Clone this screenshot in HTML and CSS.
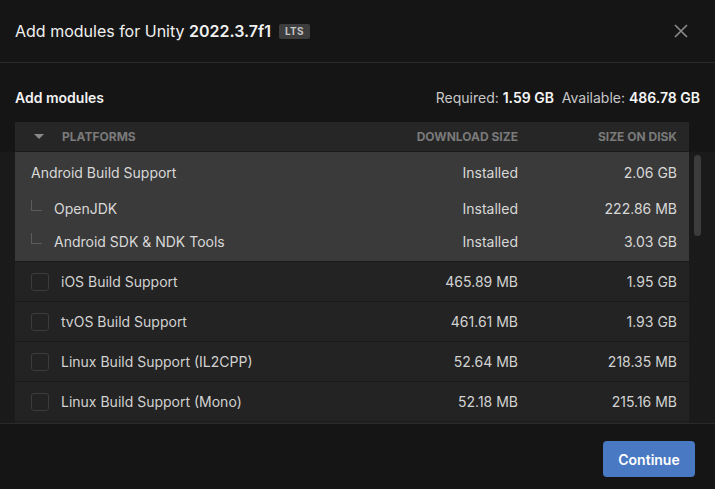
FILE: index.html
```html
<!DOCTYPE html>
<html>
<head>
<meta charset="utf-8">
<link rel="stylesheet" href="styles.css">
</head>
<body>
<div class="dialog">
  <div class="header">
    <div class="title">Add modules for Unity&nbsp;<b>2022.3.7f1</b><span class="badge">LTS</span></div>
    <svg class="close" width="14" height="14" viewBox="0 0 14 14"><path d="M1 1L13 13M13 1L1 13" stroke="#8c8c8c" stroke-width="1.6" fill="none"/></svg>
  </div>
  <div class="main">
    <div class="subbar">
      <div class="subtitle">Add modules</div>
      <div class="space">Required: <b>1.59 GB</b>&nbsp; Available: <b>486.78 GB</b></div>
    </div>
    <div class="thead">
      <div class="c-name"><svg class="caret" width="10" height="5" viewBox="0 0 10 5"><path d="M0 0H10L5 5Z" fill="#8a8a8a"/></svg><span>PLATFORMS</span></div>
      <div class="c-dl">DOWNLOAD SIZE</div>
      <div class="c-disk">SIZE ON DISK</div>
    </div>
    <div class="tbody-wrap">
      <div class="tbody">
        <div class="group">
          <div class="row grow">
            <div class="c-name">Android Build Support</div>
            <div class="c-dl">Installed</div>
            <div class="c-disk">2.06 GB</div>
          </div>
          <div class="row sub">
            <div class="c-name"><span class="elbow"></span>OpenJDK</div>
            <div class="c-dl">Installed</div>
            <div class="c-disk">222.86 MB</div>
          </div>
          <div class="row sub">
            <div class="c-name"><span class="elbow"></span>Android SDK &amp; NDK Tools</div>
            <div class="c-dl">Installed</div>
            <div class="c-disk">3.03 GB</div>
          </div>
        </div>
        <div class="row item">
          <div class="c-name"><span class="check"></span>iOS Build Support</div>
          <div class="c-dl">465.89 MB</div>
          <div class="c-disk">1.95 GB</div>
        </div>
        <div class="row item">
          <div class="c-name"><span class="check"></span>tvOS Build Support</div>
          <div class="c-dl">461.61 MB</div>
          <div class="c-disk">1.93 GB</div>
        </div>
        <div class="row item">
          <div class="c-name"><span class="check"></span>Linux Build Support (IL2CPP)</div>
          <div class="c-dl">52.64 MB</div>
          <div class="c-disk">218.35 MB</div>
        </div>
        <div class="row item">
          <div class="c-name"><span class="check"></span>Linux Build Support (Mono)</div>
          <div class="c-dl">52.18 MB</div>
          <div class="c-disk">215.16 MB</div>
        </div>
        <div class="row item"></div>
      </div>
      <div class="thumb"></div>
    </div>
  </div>
  <div class="footer">
    <button class="btn">Continue</button>
  </div>
</div>
</body>
</html>
```
FILE: styles.css
```css
* { box-sizing: border-box; }
html, body { margin: 0; padding: 0; }
body {
  background: #151515;
  font-family: Inter, "Noto Sans", sans-serif;
  color: #d4d4d4;
  font-size: 14px;
}
.dialog {
  width: 715px;
  height: 489px;
  display: flex;
  flex-direction: column;
  overflow: hidden;
}
.header {
  height: 63px;
  flex: none;
  border-bottom: 1px solid #2a2a2a;
  display: flex;
  align-items: center;
  justify-content: space-between;
  padding: 0 27px 0 15px;
}
.title {
  font-size: 16px;
  color: #f0f0f0;
  display: flex;
  align-items: center;
  white-space: nowrap;
}
.title b { font-weight: 600; }
.badge {
  margin-left: 8px;
  background: #3d3d3d;
  color: #c4c4c4;
  font-size: 10px;
  font-weight: 700;
  height: 15px;
  line-height: 15px;
  padding: 0 6px;
  border-radius: 2px;
  letter-spacing: 0.3px;
}
.close { display: block; }
.main {
  flex: 1;
  display: flex;
  flex-direction: column;
  min-height: 0;
}
.subbar {
  display: flex;
  justify-content: space-between;
  align-items: flex-start;
  padding: 25px 15px 0 15px;
  height: 59px;
  flex: none;
  line-height: 20px;
}
.subtitle { font-weight: 600; color: #f2f2f2; font-size: 14px; }
.space { color: #c8c8c8; font-size: 14px; }
.space b { color: #f5f5f5; font-weight: 600; }
.thead {
  margin-left: 15px;
  width: 674px;
  height: 30px;
  flex: none;
  background: #262626;
  border-bottom: 1px solid #1a1a1a;
  display: flex;
  align-items: center;
  font-size: 12px;
  font-weight: 700;
  color: #7a7a7a;
}
.c-name { flex: 1; display: flex; align-items: center; }
.c-dl { width: 150px; text-align: right; }
.c-disk { width: 171px; text-align: right; padding-right: 12px; }
.thead .c-name { padding-left: 19px; }
.caret { display: block; margin-right: 18px; }
.tbody-wrap {
  flex: 1;
  min-height: 0;
  background: #1a1a1a;
  padding-left: 15px;
  overflow: hidden;
  position: relative;
}
.tbody { width: 674px; }
.row { display: flex; align-items: center; font-size: 14px; }
.group {
  background: #3a3a3a;
  border-bottom: 1px solid #1b1b1b;
  padding-bottom: 3px;
  color: #d8d8d8;
}
.grow { height: 40px; }
.grow .c-name { padding-left: 16px; }
.sub { height: 33px; }
.sub .c-name { padding-left: 16px; }
.elbow {
  width: 11px;
  height: 11px;
  border-left: 1px solid #5c5c5c;
  border-bottom: 1px solid #5c5c5c;
  margin-right: 12px;
  margin-top: -6px;
}
.item {
  height: 40px;
  background: #232323;
  border-bottom: 1px solid #1a1a1a;
  color: #d2d2d2;
}
.item .c-name { padding-left: 16px; }
.check {
  width: 18px;
  height: 18px;
  border: 1px solid #3c3c3c;
  border-radius: 3px;
  margin-right: 12px;
  flex: none;
}
.thumb {
  position: absolute;
  right: 14px;
  top: 3px;
  width: 7px;
  height: 81px;
  background: #3c3c3c;
  border-radius: 4px;
}
.footer {
  height: 66px;
  flex: none;
  border-top: 1px solid #2a2a2a;
  background: #151515;
  display: flex;
  justify-content: flex-end;
  align-items: flex-start;
  padding: 17px 20px 0 0;
}
.btn {
  width: 92px;
  height: 36px;
  border: none;
  border-radius: 4px;
  background: #4a79c3;
  color: #ffffff;
  font-family: Inter, "Noto Sans", sans-serif;
  font-size: 14px;
  font-weight: 600;
}
```
